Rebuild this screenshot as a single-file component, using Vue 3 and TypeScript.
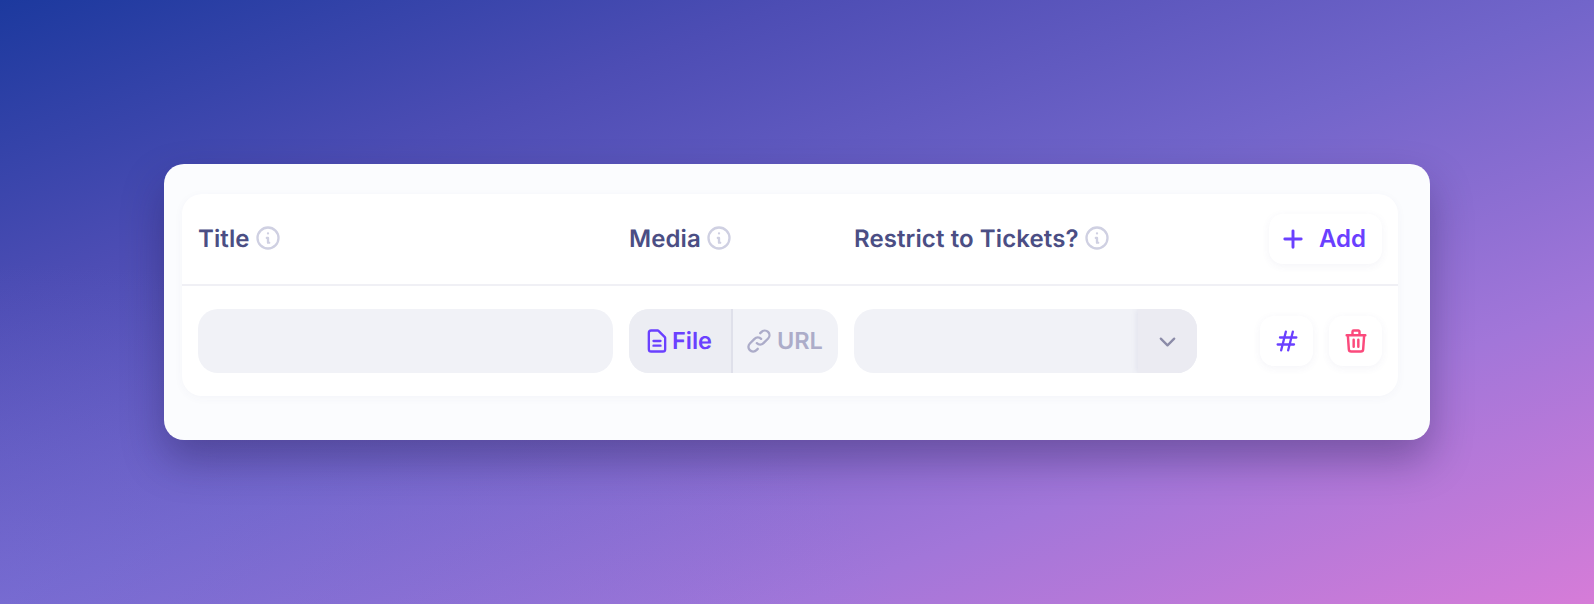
<template>
  <div class="page">
    <div class="card">
      <div class="panel">
        <div class="head">
          <div class="col-title label">Title <InfoIcon /></div>
          <div class="col-media label">Media <InfoIcon /></div>
          <div class="col-restrict label">Restrict to Tickets? <InfoIcon /></div>
          <button class="add-btn">
            <svg width="28" height="28" viewBox="0 0 24 24" fill="none" stroke="#6a40ff" stroke-width="2.5" stroke-linecap="round" stroke-linejoin="round">
              <path d="M12 5v14M5 12h14" />
            </svg>
            <span>Add</span>
          </button>
        </div>
        <div class="row">
          <div class="col-title"><div class="input"></div></div>
          <div class="col-media">
            <div class="toggle">
              <div class="toggle-opt active">
                <svg width="28" height="28" viewBox="0 0 24 24" fill="none" stroke="#6a40ff" stroke-width="2" stroke-linecap="round" stroke-linejoin="round">
                  <path d="M9 12h6m-6 4h6m2 5H7a2 2 0 01-2-2V5a2 2 0 012-2h5.586a1 1 0 01.707.293l5.414 5.414a1 1 0 01.293.707V19a2 2 0 01-2 2z" />
                </svg>
                <span>File</span>
              </div>
              <div class="toggle-opt">
                <svg width="28" height="28" viewBox="0 0 24 24" fill="none" stroke="#acacc9" stroke-width="2" stroke-linecap="round" stroke-linejoin="round">
                  <path d="M13.828 10.172a4 4 0 00-5.656 0l-4 4a4 4 0 105.656 5.656l1.102-1.101m-.758-4.899a4 4 0 005.656 0l4-4a4 4 0 00-5.656-5.656l-1.1 1.1" />
                </svg>
                <span>URL</span>
              </div>
            </div>
          </div>
          <div class="col-restrict">
            <div class="select">
              <div class="select-value"></div>
              <div class="select-arrow">
                <svg width="23" height="23" viewBox="0 0 24 24" fill="none" stroke="#8b8ba8" stroke-width="2.4" stroke-linecap="round" stroke-linejoin="round">
                  <path d="M19 9l-7 7-7-7" />
                </svg>
              </div>
            </div>
          </div>
          <div class="actions">
            <button class="icon-btn">
              <svg width="28" height="28" viewBox="0 0 24 24" fill="none" stroke="#6a40ff" stroke-width="2" stroke-linecap="round" stroke-linejoin="round">
                <path d="M7 20l4-16m2 16l4-16M6 9h14M4 15h14" />
              </svg>
            </button>
            <button class="icon-btn">
              <svg width="28" height="28" viewBox="0 0 24 24" fill="none" stroke="#fb4a7c" stroke-width="2.1" stroke-linecap="round" stroke-linejoin="round">
                <path d="M19 7l-.867 12.142A2 2 0 0116.138 21H7.862a2 2 0 01-1.995-1.858L5 7m5 4v6m4-6v6m1-10V4a1 1 0 00-1-1h-4a1 1 0 00-1 1v3M4 7h16" />
              </svg>
            </button>
          </div>
        </div>
      </div>
    </div>
  </div>
</template>

<script setup lang="ts">
import { h } from 'vue';

// small circled "i" next to the column headers
const InfoIcon = () =>
  h('svg', { class: 'info', width: 28, height: 28, viewBox: '0 0 24 24', fill: 'none', stroke: '#cfd0e2', 'stroke-width': 2, 'stroke-linecap': 'round', 'stroke-linejoin': 'round' }, [
    h('path', { d: 'M13 16h-1v-4h-1m1-4h.01M21 12a9 9 0 11-18 0 9 9 0 0118 0z' }),
  ]);
</script>

<style>
html,
body {
  margin: 0;
  height: 100%;
}
</style>

<style scoped>
.page {
  width: 1594px;
  height: 604px;
  box-sizing: border-box;
  padding-top: 164px;
  display: flex;
  justify-content: center;
  align-items: flex-start;
  background:
    radial-gradient(ellipse at 0% 100%, rgba(130, 120, 225, 0.3), transparent 40%),
    linear-gradient(to bottom right, #1c399e 0%, #4d4db4 25%, #7265ca 50%, #a276d9 75%, #d67cd8 100%);
  font-family: Inter, "Liberation Sans", sans-serif;
  text-rendering: geometricPrecision;
}

.card {
  width: 1266px;
  height: 276px;
  box-sizing: border-box;
  padding: 30px 32px 44px 18px;
  background: #fbfcfe;
  border-radius: 20px;
  box-shadow: 0 20px 40px rgba(30, 20, 70, 0.35);
}

.panel {
  height: 202px;
  background: #fff;
  border-radius: 20px;
  box-shadow: 0 2px 10px rgba(70, 70, 130, 0.04);
}

.head,
.row {
  display: flex;
  align-items: center;
  padding: 0 16px;
  gap: 16px;
}

.head {
  height: 92px;
  box-sizing: border-box;
  border-bottom: 2px solid #f0f0f5;
}

.row {
  height: 110px;
}

.col-title {
  width: 415px;
}

.col-media {
  width: 209px;
}

.col-restrict {
  width: 343px;
}

.label {
  display: flex;
  align-items: center;
  gap: 4px;
  margin-top: -2px;
  font-size: 24px;
  font-weight: 600;
  letter-spacing: 0.1px;
  color: #4b4e84;
  white-space: nowrap;
}

.info {
  flex: none;
}

.add-btn {
  margin-left: auto;
  width: 113px;
  height: 50px;
  padding: 0 0 0 10px;
  display: flex;
  align-items: center;
  gap: 12px;
  border: none;
  border-radius: 14px;
  background: #fff;
  box-shadow: 0 2px 8px rgba(70, 70, 130, 0.06);
  color: #6a40ff;
  font: 600 24px Inter, "Liberation Sans", sans-serif;
}

.add-btn span,
.toggle-opt span {
  margin-bottom: 2px;
}

.input,
.select,
.toggle {
  height: 64px;
  border-radius: 20px;
  background: #f1f2f7;
}

.toggle {
  display: flex;
  overflow: hidden;
}

.toggle-opt {
  display: flex;
  align-items: center;
  gap: 4px;
  width: 105px;
  box-sizing: border-box;
  padding-left: 12px;
  font-size: 23.5px;
  font-weight: 600;
  color: #acacc9;
}

.toggle-opt.active {
  width: 104px;
  gap: 1px;
  padding-left: 14px;
  background: #ecedf3;
  border-right: 2px solid #dfe0ea;
  color: #6a40ff;
}

.select {
  display: flex;
  overflow: hidden;
}

.select-value {
  flex: 1;
}

.select-arrow {
  width: 59px;
  display: flex;
  align-items: center;
  justify-content: center;
  background: #ebebf2;
  box-shadow: -1px 0 6px rgba(90, 90, 150, 0.1);
}

.actions {
  margin-left: auto;
  display: flex;
  gap: 16px;
}

.icon-btn {
  width: 53px;
  height: 50px;
  padding: 0;
  display: flex;
  align-items: center;
  justify-content: center;
  border: none;
  border-radius: 14px;
  background: #fff;
  box-shadow: 0 2px 8px rgba(70, 70, 130, 0.06);
}
</style>
